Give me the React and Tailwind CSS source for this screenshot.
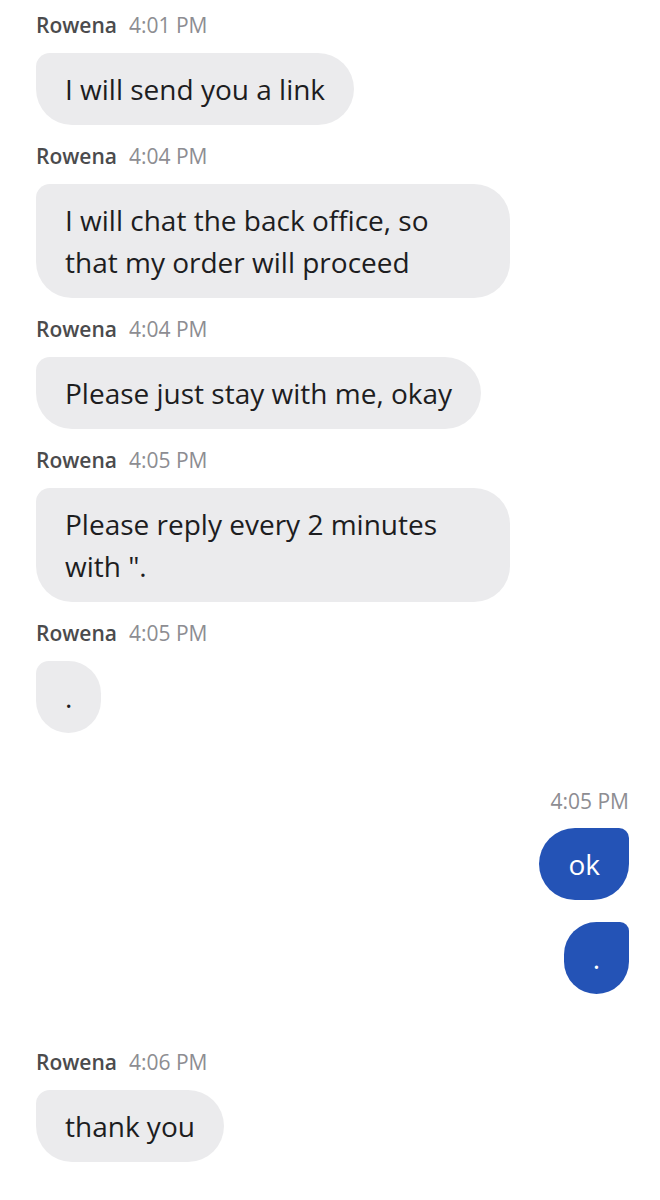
import React from "react";

const messages = [
    { from: "them", time: "4:01 PM", text: "I will send you a link" },
    { from: "them", time: "4:04 PM", text: "I will chat the back office, so that my order will proceed" },
    { from: "them", time: "4:04 PM", text: "Please just stay with me, okay" },
    { from: "them", time: "4:05 PM", text: "Please reply every 2 minutes with \"." },
    { from: "them", time: "4:05 PM", text: "." },
    { from: "me", time: "4:05 PM", texts: ["ok", "."] },
    { from: "them", time: "4:06 PM", text: "thank you" },
];

function Incoming({ time, text }) {
    return (
        <div className="flex flex-col items-start mb-4">
            <div className="h-[28px] pt-[3px] flex items-center gap-[12px] text-[21px]">
                <span className="font-semibold text-[#4b4b4d]">Rowena</span>
                <span className="text-[#8d8d92]">{time}</span>
            </div>
            <div className="mt-[15px] max-w-[474px] bg-[#ebebed] text-[#1d1d1f] text-[28px] leading-[42px] px-[29px] py-[15px] rounded-tl-[14px] rounded-bl-[36px] rounded-r-[36px]">
                {text}
            </div>
        </div>
    );
}

function Outgoing({ time, texts }) {
    return (
        <div className="flex flex-col items-end mt-[53px] mb-[53px] gap-[22px]">
            <div className="h-[28px] pt-[3px] -mb-[8px] flex items-center text-[21px] text-[#8d8d92]">{time}</div>
            {texts.map((t, i) => (
                <div
                    key={i}
                    className="bg-[#2453b6] text-white text-[28px] leading-[42px] px-[29px] py-[15px] rounded-tr-[10px] rounded-tl-[36px] rounded-b-[36px]"
                >
                    {t}
                </div>
            ))}
        </div>
    );
}

export default function App() {
    return (
        <div className="w-[660px] min-h-[1200px] bg-white pt-[10px] pl-[36px] pr-[31px] font-['Open_Sans',sans-serif]">
            {messages.map((m, i) =>
                m.from === "me" ? (
                    <Outgoing key={i} time={m.time} texts={m.texts} />
                ) : (
                    <Incoming key={i} time={m.time} text={m.text} />
                )
            )}
        </div>
    );
}
